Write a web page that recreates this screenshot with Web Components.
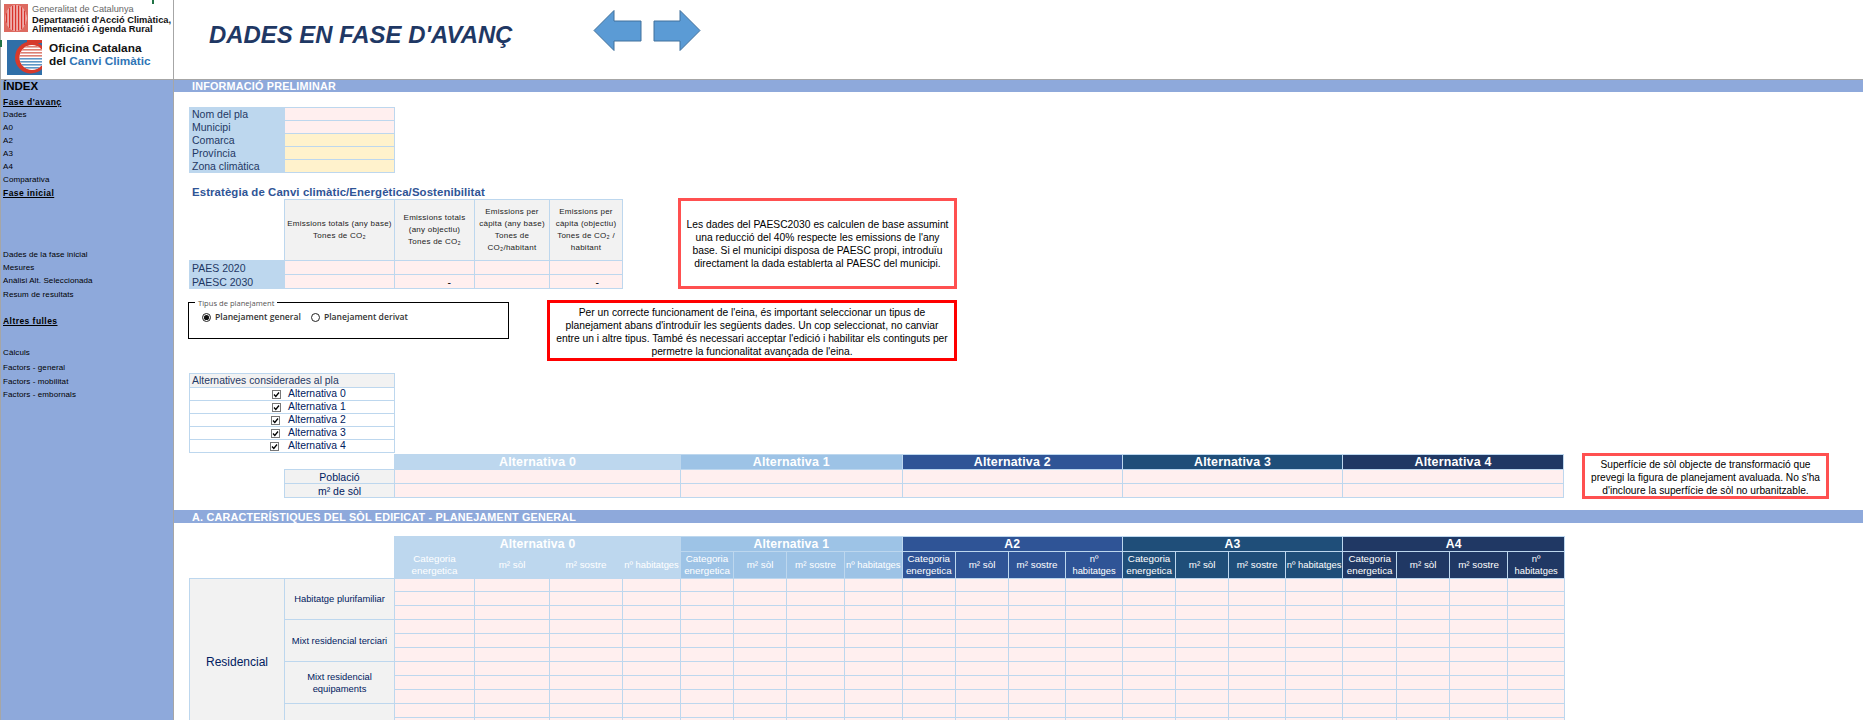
<!DOCTYPE html>
<html lang="ca">
<head>
<meta charset="utf-8">
<title>Dades en fase d'avanç</title>
<style>
  html, body { margin: 0; height: 720px; overflow: hidden; background: #fff; font-family: "Liberation Sans", Arial, sans-serif; }
</style>
</head>
<body>
<sheet-app>
  <logo-pane slot="logo"></logo-pane>
  <title-bar slot="title">DADES EN FASE D'AVANÇ</title-bar>
  <index-nav slot="nav"></index-nav>

  <section-bar>INFORMACIÓ PRELIMINAR</section-bar>
  <form-table></form-table>
  <strategy-block>
    <note-box tone="#ff5050" style="width:279px;height:91px;margin-left:55px">Les dades del PAESC2030 es calculen de base assumint<br>una reducció del 40% respecte les emissions de l'any<br>base. Si el municipi disposa de PAESC propi, introduïu<br>directament la dada establerta al PAESC del municipi.</note-box>
  </strategy-block>
  <plan-type>
    <note-box tone="#ff0000" style="width:410px;height:61px;margin-left:38px;align-items:flex-start;padding-top:3px">Per un correcte funcionament de l'eina, és important seleccionar un tipus de<br>planejament abans d'introduïr les següents dades. Un cop seleccionat, no canviar<br>entre un i altre tipus. També és necessari acceptar l'edició i habilitar els continguts per<br>permetre la funcionalitat avançada de l'eina.</note-box>
  </plan-type>
  <alt-list></alt-list>
  <alt-summary>
    <note-box tone="#ff5050" style="width:247px;height:46px;margin-left:18px;padding-top:2px;font-size:10.2px">Superfície de sòl objecte de transformació que<br>prevegi la figura de planejament avaluada. No s'ha<br>d'incloure la superfície de sòl no urbanitzable.</note-box>
  </alt-summary>
  <section-bar style="margin-top:11px;height:13px">A. CARACTERÍSTIQUES DEL SÒL EDIFICAT - PLANEJAMENT GENERAL</section-bar>
  <land-matrix></land-matrix>
</sheet-app>

<script>
  // shared look of the spreadsheet tables
  const cellCss = `
    table { border-collapse: collapse; table-layout: fixed; }
    td { padding: 0; border: 1px solid #bdd7ee; overflow: hidden; white-space: nowrap; color: #002060; font-size: 10.5px; line-height: 12px; }
    .in { background: #ffefef; }
    .yl { background: #fff2cc; }
    .lb { background: #bdd7ee; color: #1f3864; padding-left: 2px; }
    .gr { background: #f2f2f2; }
    .c { text-align: center; }
    .none { border: 0; background: transparent; }
  `;

  const altColours = ["#bdd7ee", "#9dc3e6", "#2f5496", "#1f4e79", "#203864"];

  class SheetApp extends HTMLElement {
    constructor() {
      super().attachShadow({ mode: "open" });
      this.shadowRoot.innerHTML = `
        <style>
          :host { display: grid; grid-template-columns: 174px 1689px; grid-template-rows: 80px 640px; width: 1863px; height: 720px; overflow: hidden; }
          .main { overflow: hidden; }
        </style>
        <slot name="logo"></slot>
        <slot name="title"></slot>
        <slot name="nav"></slot>
        <div class="main"><slot></slot></div>
      `;
    }
  }

  class LogoPane extends HTMLElement {
    constructor() {
      super().attachShadow({ mode: "open" });
      const stripes = [1.6, 4.6, 7.6, 10.6, 13.6, 16.6, 19.6].map((x) => `<rect x="${x}" y="0" width="1.9" height="28" fill="#d8332c"/>`).join("");
      let bands = "";
      for (let i = 0; i < 8; i++) {
        bands += `<rect x="12" y="${6 + i * 3}" width="26" height="1.6" fill="${i < 4 ? "#dd7f72" : "#5f97c6"}"/>`;
      }
      this.shadowRoot.innerHTML = `
        <style>
          :host { display: block; position: relative; box-sizing: border-box; height: 80px; border-right: 1px solid #a6a6a6; border-bottom: 1px solid #a6a6a6; border-left: 1px solid #a6a6a6; }
          .gen { display: flex; gap: 4px; padding: 4px 0 0 3px; }
          .gen svg { width: 24px; height: 28px; flex: none; }
          .gen div { font-size: 9.3px; line-height: 9.6px; color: #111; font-weight: bold; white-space: nowrap; padding-top: 1px; }
          .gen div span { display: block; color: #666; font-weight: normal; font-size: 9.2px; margin-bottom: 1px; }
          .occ { display: flex; gap: 7px; align-items: center; padding: 5px 0 0 6px; }
          .occ svg { width: 35px; height: 35px; flex: none; }
          .occ div { font-size: 11.8px; line-height: 12.6px; font-weight: bold; color: #111; white-space: nowrap; margin-top: -5px; }
          .occ b { color: #2e75b6; }
          /* excel selection handles left behind in the capture */
          i { position: absolute; background: #217346; }
          .h1 { left: 151px; top: 0; width: 2px; height: 4px; }
          .h2 { left: -1px; top: 40px; width: 2px; height: 7px; }
        </style>
        <i class="h1"></i><i class="h2"></i>
        <div class="gen">
          <svg viewBox="0 0 24 28">
            <defs><clipPath id="ov"><ellipse cx="12" cy="14" rx="10.5" ry="13"/></clipPath></defs>
            <rect width="24" height="28" fill="#dd6a60"/>
            <ellipse cx="12" cy="14" rx="10.5" ry="13" fill="#fff"/>
            <g clip-path="url(#ov)">${stripes}</g>
          </svg>
          <div><span>Generalitat de Catalunya</span>Departament d'Acció Climàtica,<br>Alimentació i Agenda Rural</div>
        </div>
        <div class="occ">
          <svg viewBox="0 0 35 35">
            <defs>
              <clipPath id="sq"><rect width="35" height="35"/></clipPath>
              <clipPath id="in"><circle cx="25" cy="17.5" r="12.5"/></clipPath>
            </defs>
            <g clip-path="url(#sq)">
              <rect width="35" height="35" fill="#2f6fa8"/>
              <rect x="20" width="15" height="3" fill="#d63a2c"/>
              <circle cx="24" cy="17.5" r="16" fill="#d63a2c"/>
              <circle cx="25" cy="17.5" r="12.5" fill="#fff"/>
              <g clip-path="url(#in)">${bands}</g>
            </g>
          </svg>
          <div>Oficina Catalana<br>del <b>Canvi Climàtic</b></div>
        </div>
      `;
    }
  }

  class TitleBar extends HTMLElement {
    constructor() {
      super().attachShadow({ mode: "open" });
      this.shadowRoot.innerHTML = `
        <style>
          :host { display: flex; align-items: flex-start; box-sizing: border-box; height: 80px; border-bottom: 1px solid #a6a6a6; padding-left: 35px; }
          h1 { flex: 0 0 384px; margin: 23px 0 0; font: italic bold 23.9px/24px "Liberation Sans", Arial, sans-serif; color: #1f3864; white-space: nowrap; }
          svg { flex: none; margin-top: 9px; }
          .r { margin-left: 10px; }
        </style>
        <h1><slot></slot></h1>
        <svg width="50" height="44" viewBox="0 0 50 44"><path d="M1 21.5 21 1.5V12H48V32H21V41.5Z" fill="#5b9bd5" stroke="#41719c"/></svg>
        <svg class="r" width="50" height="44" viewBox="0 0 50 44"><path d="M47 21.5 27 1.5V12H1V32H27V41.5Z" fill="#5b9bd5" stroke="#41719c"/></svg>
      `;
    }
  }

  class IndexNav extends HTMLElement {
    constructor() {
      super().attachShadow({ mode: "open" });
      // [text, kind, space above]
      const items = [
        ["ÍNDEX", "head", 0], ["Fase d'avanç", "link", 4], ["Dades", "", 1], ["A0", "", 1], ["A2", "", 1], ["A3", "", 1], ["A4", "", 1],
        ["Comparativa", "", 1], ["Fase inicial", "link", 1], ["Dades de la fase inicial", "", 50], ["Mesures", "", 1],
        ["Anàlisi Alt. Seleccionada", "", 1], ["Resum de resultats", "", 2], ["Altres fulles", "link", 14], ["Càlculs", "", 20],
        ["Factors - general", "", 3], ["Factors - mobilitat", "", 2], ["Factors - embornals", "", 1],
      ];
      this.shadowRoot.innerHTML = `
        <style>
          :host { display: block; box-sizing: border-box; height: 640px; background: #8ea9db; border-right: 1px solid #a6a6a6; border-left: 1px solid #a6a6a6; padding-left: 2px; }
          div { height: 12px; line-height: 12px; font-size: 8px; letter-spacing: .1px; color: #000; white-space: nowrap; }
          .head { font-size: 11.5px; font-weight: bold; letter-spacing: 0; }
          .link { font-size: 8.5px; font-weight: bold; text-decoration: underline; letter-spacing: .45px; }
        </style>
        ${items.map(([t, k, top]) => `<div class="${k}" style="margin-top:${top}px">${t}</div>`).join("")}
      `;
    }
  }

  class SectionBar extends HTMLElement {
    constructor() {
      super().attachShadow({ mode: "open" });
      this.shadowRoot.innerHTML = `
        <style>
          :host { display: flex; align-items: center; height: 12px; background: #8ea9db; padding-left: 18px; color: #fff; font-size: 10.8px; font-weight: bold; letter-spacing: .2px; white-space: nowrap; }
        </style>
        <slot></slot>
      `;
    }
  }

  class FormTable extends HTMLElement {
    constructor() {
      super().attachShadow({ mode: "open" });
      const rows = [["Nom del pla", "in"], ["Municipi", "in"], ["Comarca", "yl"], ["Província", "yl"], ["Zona climàtica", "yl"]];
      this.shadowRoot.innerHTML = `
        <style>
          ${cellCss}
          :host { display: block; margin: 15px 0 0 15px; height: 66px; }
          td { font-size: 10.5px; }
          tr { height: 13px; }
        </style>
        <table style="width:205px">
          <col style="width:95px"><col style="width:110px">
          ${rows.map(([t, c]) => `<tr><td class="lb">${t}</td><td class="${c}"></td></tr>`).join("")}
        </table>
      `;
    }
  }

  class StrategyBlock extends HTMLElement {
    constructor() {
      super().attachShadow({ mode: "open" });
      const heads = [
        "Emissions totals (any base)<br>Tones de CO₂",
        "Emissions totals<br>(any objectiu)<br>Tones de CO₂",
        "Emissions per<br>càpita (any base)<br>Tones de<br>CO₂/habitant",
        "Emissions per<br>càpita (objectiu)<br>Tones de CO₂ /<br>habitant",
      ];
      this.shadowRoot.innerHTML = `
        <style>
          ${cellCss}
          :host { display: block; margin: 13px 0 0 15px; }
          h2 { margin: 0; height: 12px; padding-left: 3px; font-size: 11.4px; line-height: 12px; font-weight: bold; color: #2f5496; letter-spacing: .1px; white-space: nowrap; }
          .row { display: flex; align-items: flex-start; height: 91px; }
          table { margin-top: 1px; width: 433px; }
          th { padding: 0; font-weight: normal; background: #f2f2f2; border: 1px solid #bdd7ee; font-size: 8px; line-height: 12px; letter-spacing: .25px; color: #222; }
          .top { height: 61px; }
          tr.d { height: 14px; }
          .dash { text-align: right; padding-right: 23px; color: #000; }
        </style>
        <h2>Estratègia de Canvi climàtic/Energètica/Sostenibilitat</h2>
        <div class="row">
          <table>
            <col style="width:95px"><col style="width:110px"><col style="width:80px"><col style="width:75px"><col style="width:73px">
            <tr class="top"><td class="none"></td>${heads.map((h) => `<th>${h}</th>`).join("")}</tr>
            <tr class="d"><td class="lb">PAES 2020</td><td class="in"></td><td class="in"></td><td class="in"></td><td class="in"></td></tr>
            <tr class="d"><td class="lb">PAESC 2030</td><td class="in"></td><td class="in dash">-</td><td class="in"></td><td class="in dash">-</td></tr>
          </table>
          <slot></slot>
        </div>
      `;
    }
  }

  class NoteBox extends HTMLElement {
    constructor() {
      super().attachShadow({ mode: "open" });
      this.shadowRoot.innerHTML = `
        <style>
          :host { display: flex; flex: none; box-sizing: border-box; align-items: center; justify-content: center; border: 3px solid var(--tone); text-align: center; font-size: 10.3px; line-height: 13px; color: #000; white-space: nowrap; overflow: hidden; background: #fff; }
        </style>
        <div><slot></slot></div>
      `;
    }
    connectedCallback() {
      this.style.setProperty("--tone", this.getAttribute("tone"));
    }
  }

  class PlanType extends HTMLElement {
    constructor() {
      super().attachShadow({ mode: "open" });
      this.shadowRoot.innerHTML = `
        <style>
          :host { display: flex; align-items: flex-start; margin: 11px 0 0 14px; height: 61px; }
          .group { position: relative; box-sizing: border-box; flex: none; width: 321px; height: 37px; margin-top: 2px; border: 1px solid #000; display: flex; align-items: center; padding: 0 0 7px 13px; font: 600 8.6px "Open Sans", sans-serif; color: #333; white-space: nowrap; }
          .legend { position: absolute; left: 6px; top: -5px; padding: 0 3px; background: #fff; font: 400 7.6px/10px "Open Sans", sans-serif; color: #555; }
          svg { flex: none; margin-right: 4px; }
          .second { margin-left: 10px; }
        </style>
        <div class="group">
          <span class="legend">Tipus de planejament</span>
          <svg width="9" height="9" viewBox="0 0 9 9"><circle cx="4.5" cy="4.5" r="4" fill="#fff" stroke="#222"/><circle cx="4.5" cy="4.5" r="2.6" fill="#111"/></svg>
          <span>Planejament general</span>
          <svg class="second" width="9" height="9" viewBox="0 0 9 9"><circle cx="4.5" cy="4.5" r="4" fill="#fff" stroke="#222"/></svg>
          <span>Planejament derivat</span>
        </div>
        <slot></slot>
      `;
    }
  }

  class AltList extends HTMLElement {
    constructor() {
      super().attachShadow({ mode: "open" });
      // the form controls sit slightly off from row to row in the sheet
      const offsets = [82, 82, 81, 81, 80];
      this.shadowRoot.innerHTML = `
        <style>
          ${cellCss}
          :host { display: block; margin: 12px 0 0 15px; height: 80px; }
          td { font-size: 10.4px; }
          .head { height: 14px; }
          .head td { padding-left: 2px; }
          tr { height: 13px; }
          .line { display: flex; align-items: center; height: 12px; }
          .box { display: flex; flex: none; }
          svg { display: block; }
        </style>
        <table style="width:205px">
          <col style="width:205px">
          <tr class="head"><td class="gr" style="color:#1f3864">Alternatives considerades al pla</td></tr>
          ${offsets.map((o, i) => `
            <tr><td><div class="line" style="padding-left:${o}px">
              <span class="box" style="width:${98 - o}px"><svg width="9" height="9" viewBox="0 0 9 9"><rect x=".5" y=".5" width="8" height="8" fill="#fff" stroke="#777"/><path d="M2 4.5 3.8 6.5 7 2.5" fill="none" stroke="#000" stroke-width="1.3"/></svg></span>
              <span>Alternativa ${i}</span>
            </div></td></tr>`).join("")}
        </table>
      `;
    }
  }

  class AltSummary extends HTMLElement {
    constructor() {
      super().attachShadow({ mode: "open" });
      const widths = [286, 221.5, 220.5, 220, 221];
      const names = [0, 1, 2, 3, 4];
      this.shadowRoot.innerHTML = `
        <style>
          ${cellCss}
          :host { display: flex; align-items: flex-start; margin: 0 0 0 110px; height: 46px; }
          table { margin-top: 1px; width: 1279px; flex: none; }
          .h { height: 15px; }
          .h td { color: #fff; font-weight: bold; font-size: 12.4px; letter-spacing: .2px; text-align: center; }
          .d { height: 14px; }
        </style>
        <table>
          <col style="width:110px">${widths.map((w) => `<col style="width:${w}px">`).join("")}
          <tr class="h"><td class="none"></td>${names.map((n) => `<td style="background:${altColours[n]}">Alternativa ${n}</td>`).join("")}</tr>
          <tr class="d"><td class="gr c">Població</td>${names.map(() => `<td class="in"></td>`).join("")}</tr>
          <tr class="d"><td class="gr c">m² de sòl</td>${names.map(() => `<td class="in"></td>`).join("")}</tr>
        </table>
        <slot></slot>
      `;
    }
  }

  class LandMatrix extends HTMLElement {
    constructor() {
      super().attachShadow({ mode: "open" });
      const altCols = [[80, 75, 73, 58], [53, 53, 58, 57.5], [53.5, 53, 57, 57], [53, 53, 57, 57], [54, 53, 58, 57]];
      const altNames = ["Alternativa 0", "Alternativa 1", "A2", "A3", "A4"];
      const nHab = ["nº habitatges", "nº habitatges", "nº<br>habitatges", "nº habitatges", "nº<br>habitatges"];
      const cols = altCols.flat();
      const blankCells = cols.map(() => `<td class="in"></td>`).join("");
      // [rows spanned, label]; the last group runs off the bottom of the window
      const groups = [[3, "Habitatge plurifamiliar"], [3, "Mixt residencial terciari"], [3, "Mixt residencial<br>equipaments"], [3, ""]];
      let body = "";
      let first = true;
      groups.forEach(([span, label]) => {
        for (let i = 0; i < span; i++) {
          body += `<tr class="d"${first ? ' style="height:13px"' : ""}>`;
          if (first) body += `<td class="gr c res" rowspan="12">Residencial</td>`;
          first = false;
          if (i === 0) body += `<td class="gr c grp" rowspan="${span}">${label}</td>`;
          body += blankCells + `</tr>`;
        }
      });
      this.shadowRoot.innerHTML = `
        <style>
          ${cellCss}
          :host { display: block; margin: 13px 0 0 15px; }
          table { width: 1374px; }
          .a { height: 15px; }
          .a td { color: #fff; font-weight: bold; font-size: 12.2px; letter-spacing: .2px; text-align: center; }
          .b { height: 27px; }
          .b td { color: #fff; font-size: 9.8px; text-align: center; white-space: normal; }
          .b td.tight { font-size: 9.4px; white-space: nowrap; }
          .d { height: 14px; }
          .res { font-size: 12px; }
          .grp { font-size: 9.4px; line-height: 12px; white-space: normal; }
        </style>
        <table>
          <col style="width:95px"><col style="width:110px">${cols.map((w) => `<col style="width:${w}px">`).join("")}
          <tr class="a"><td class="none" colspan="2"></td>${altNames.map((n, i) => `<td colspan="4" style="background:${altColours[i]}">${n}</td>`).join("")}</tr>
          <tr class="b"><td class="none" colspan="2"></td>${altNames.map((n, i) => {
            const c = `style="background:${altColours[i]}${i === 0 ? ";border-color:" + altColours[0] : ""}"`;
            return `<td ${c}>Categoria<br>energetica</td><td ${c}>m² sòl</td><td ${c}>m² sostre</td><td class="tight" ${c}>${nHab[i]}</td>`;
          }).join("")}</tr>
          ${body}
        </table>
      `;
    }
  }

  customElements.define("sheet-app", SheetApp);
  customElements.define("logo-pane", LogoPane);
  customElements.define("title-bar", TitleBar);
  customElements.define("index-nav", IndexNav);
  customElements.define("section-bar", SectionBar);
  customElements.define("form-table", FormTable);
  customElements.define("strategy-block", StrategyBlock);
  customElements.define("note-box", NoteBox);
  customElements.define("plan-type", PlanType);
  customElements.define("alt-list", AltList);
  customElements.define("alt-summary", AltSummary);
  customElements.define("land-matrix", LandMatrix);
</script>
</body>
</html>
